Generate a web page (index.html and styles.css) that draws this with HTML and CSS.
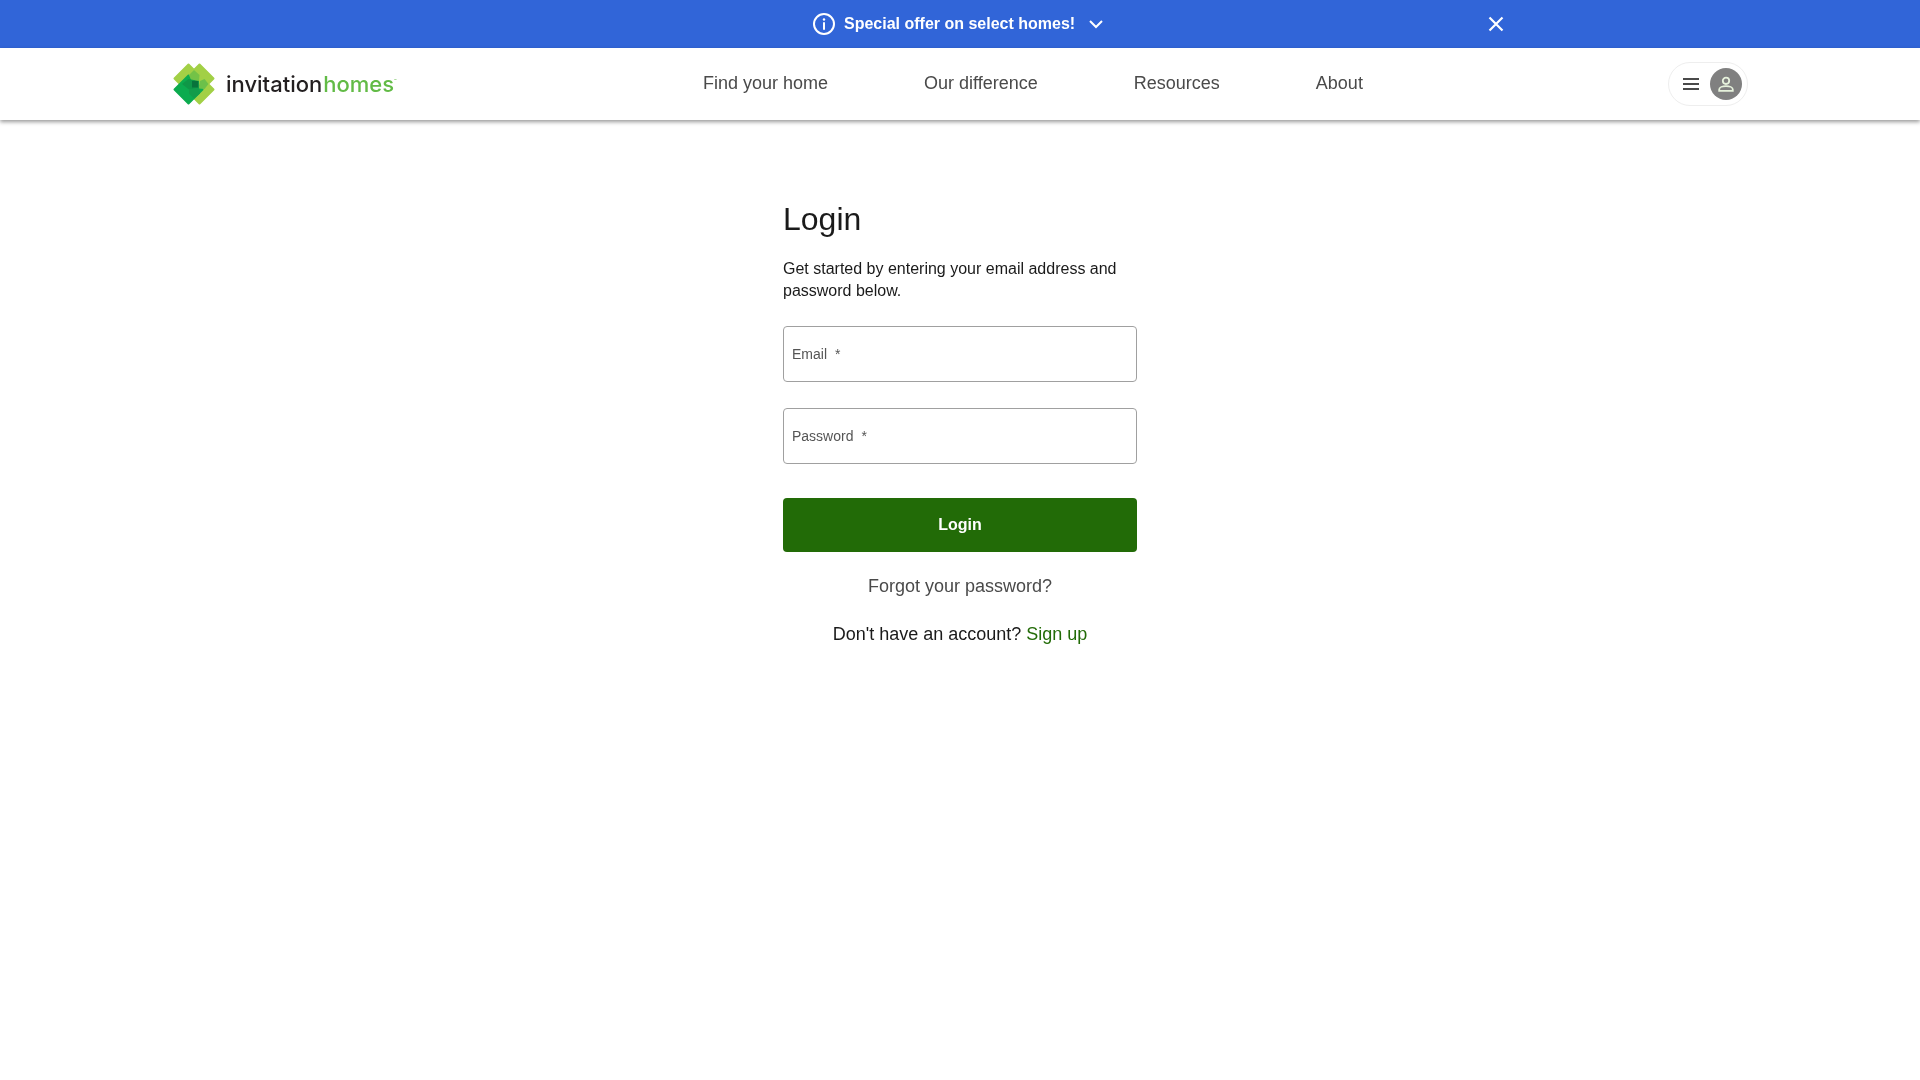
FILE: index.html
```html
<!DOCTYPE html>
<html lang="en">
<head>
<meta charset="utf-8">
<title>Login | Invitation Homes</title>
<link rel="stylesheet" href="styles.css">
</head>
<body>
<div class="banner">
  <div class="banner-center">
    <svg class="info" width="24" height="24" viewBox="0 0 24 24" fill="none" stroke="#fff" stroke-width="2"><circle cx="12" cy="12" r="10"/><path d="M12 11v6" stroke-linecap="round"/><circle cx="12" cy="7.5" r="1.2" fill="#fff" stroke="none"/></svg>
    <span class="banner-text">Special offer on select homes!</span>
    <svg class="chev" width="18" height="18" viewBox="0 0 18 18" fill="none" stroke="#fff" stroke-width="2"><path d="M3 6l6 6 6-6"/></svg>
  </div>
  <svg class="close" width="16" height="16" viewBox="0 0 16 16" fill="none" stroke="#fff" stroke-width="2.2"><path d="M1.5 1.5l13 13M14.5 1.5l-13 13"/></svg>
</div>
<header class="header">
  <a class="logo" href="#">
    <svg width="42" height="42" viewBox="0 0 42 42" stroke-linejoin="round">
      <path d="M15.500 1.500 L29.500 15.500 L15.500 29.500 L1.500 15.500 Z" fill="#a2d046" stroke="#a2d046" stroke-width="2"/>
      <path d="M26.500 1.500 L40.500 15.500 L26.500 29.500 L12.500 15.500 Z" fill="#a2d046" stroke="#a2d046" stroke-width="2"/>
      <path d="M26.500 12.500 L40.500 26.500 L26.500 40.500 L12.500 26.500 Z" fill="#a2d046" stroke="#a2d046" stroke-width="2"/>
      <path d="M15.500 12.500 L29.500 26.500 L15.500 40.500 L1.500 26.500 Z" fill="#0cab4f" stroke="#0cab4f" stroke-width="2"/>
      <path d="M21 7 L26.500 12 L26 18 L18 17 L16 12 Z" fill="#74c247"/>
      <path d="M27 18 L31.500 16 L35.500 21 L31.500 26 L25.500 25.500 Z" fill="#6cc04a"/>
      <path d="M15.500 16 L26 18 L26 25 L16 26.500 L9 21 Z" fill="#0f9747"/>
      <path d="M16 26.500 L26 25 L27 30.500 L21 35.500 L16 30.500 Z" fill="#139c4a"/>
      <rect x="19" y="18" width="6" height="6.500" fill="#08733b"/>
    </svg>
    <span class="logo-text"><span class="logo-a">invitation</span><span class="logo-b">homes</span><sup class="tm">™</sup></span>
  </a>
  <nav class="nav">
    <a href="#">Find your home</a>
    <a href="#">Our difference</a>
    <a href="#">Resources</a>
    <a href="#">About</a>
  </nav>
  <div class="menu-pill">
    <svg width="18" height="14" viewBox="0 0 18 14" fill="#4a4a4a"><rect x="1" y="1" width="16" height="2"/><rect x="1" y="6" width="16" height="2"/><rect x="1" y="11" width="16" height="2"/></svg>
    <span class="avatar">
      <svg width="18" height="18" viewBox="0 0 18 18" fill="none" stroke="#e6f2dc" stroke-width="1.8"><circle cx="9" cy="5.800" r="3.200"/><path d="M2.200 15.800h13.600v-1.300c0-2-3.300-3.300-6.800-3.300s-6.800 1.300-6.800 3.300z"/></svg>
    </span>
  </div>
</header>
<main class="main">
  <form class="form">
    <h1 class="title">Login</h1>
    <p class="intro">Get started by entering your email address and password below.</p>
    <label class="field"><span>Email</span><span class="star">*</span></label>
    <label class="field second"><span>Password</span><span class="star">*</span></label>
    <button class="btn" type="button">Login</button>
    <a class="forgot" href="#">Forgot your password?</a>
    <p class="signup">Don't have an account? <a href="#">Sign up</a></p>
  </form>
</main>
</body>
</html>
```
FILE: styles.css
```css
* { box-sizing: border-box; }
html, body { margin: 0; padding: 0; background: #fff; }
body { font-family: "Liberation Sans", Arial, sans-serif; height: 1080px; overflow: hidden; color: #1a1a1a; }
a { text-decoration: none; }

.banner { height: 48px; background: #3165d8; position: relative; display: flex; align-items: center; justify-content: center; color: #fff; padding-right: 3px; }
.banner-center { display: flex; align-items: center; will-change: transform; }
.banner-text { font-size: 16px; font-weight: 700; margin-left: 8px; margin-right: 12px; }
.close { position: absolute; left: 1488px; top: 16px; }

.header { height: 72px; background: #fff; box-shadow: 0 2px 4px rgba(0,0,0,.4); display: flex; align-items: center; padding: 0 172px 0 173px; position: relative; }
.logo { display: flex; align-items: center; width: 530px; will-change: transform; }
.logo-text { margin-left: 11px; font-family: Inter, sans-serif; font-size: 22px; font-weight: 500; letter-spacing: 0; line-height: 1; white-space: nowrap; }
.logo-a { color: #231f20; }
.logo-b { color: #62bb46; margin-left: 1px; }
.tm { font-size: 4px; color: #62bb46; vertical-align: 10px; line-height: 0; }
.nav { display: flex; gap: 96px; flex: 1; font-size: 18px; margin-top: -2px; will-change: transform; }
.nav a { color: #4a4a4a; }
.menu-pill { width: 80px; height: 44px; border: 1px solid #eee; border-radius: 22px; display: flex; align-items: center; justify-content: space-between; padding: 0 5px 0 13px; }
.avatar { width: 32px; height: 32px; border-radius: 50%; background: #808080; display: flex; align-items: center; justify-content: center; }

.main { display: flex; justify-content: center; will-change: transform; }
.form { width: 354px; padding-top: 80px; display: flex; flex-direction: column; }
.title { font-size: 32px; font-weight: 400; line-height: 38px; margin: 0 0 20px; color: #1a1a1a; }
.intro { font-size: 16px; line-height: 22px; margin: 0 0 24px; color: #1a1a1a; }
.field { height: 56px; border: 1px solid #a0a0a0; border-radius: 4px; display: flex; align-items: center; padding: 0 8px; font-size: 14px; color: #555; }
.field.second { margin-top: 26px; }
.star { margin-left: 8px; }
.btn { margin-top: 34px; height: 54px; background: #226b07; color: #fff; border: 0; border-radius: 4px; font: 700 16px "Liberation Sans", Arial, sans-serif; }
.forgot { margin-top: 24px; text-align: center; font-size: 18px; line-height: 21px; color: #4a4a4a; }
.signup { margin: 27px 0 0; text-align: center; font-size: 18px; line-height: 21px; color: #1a1a1a; }
.signup a { color: #226b07; }
```
